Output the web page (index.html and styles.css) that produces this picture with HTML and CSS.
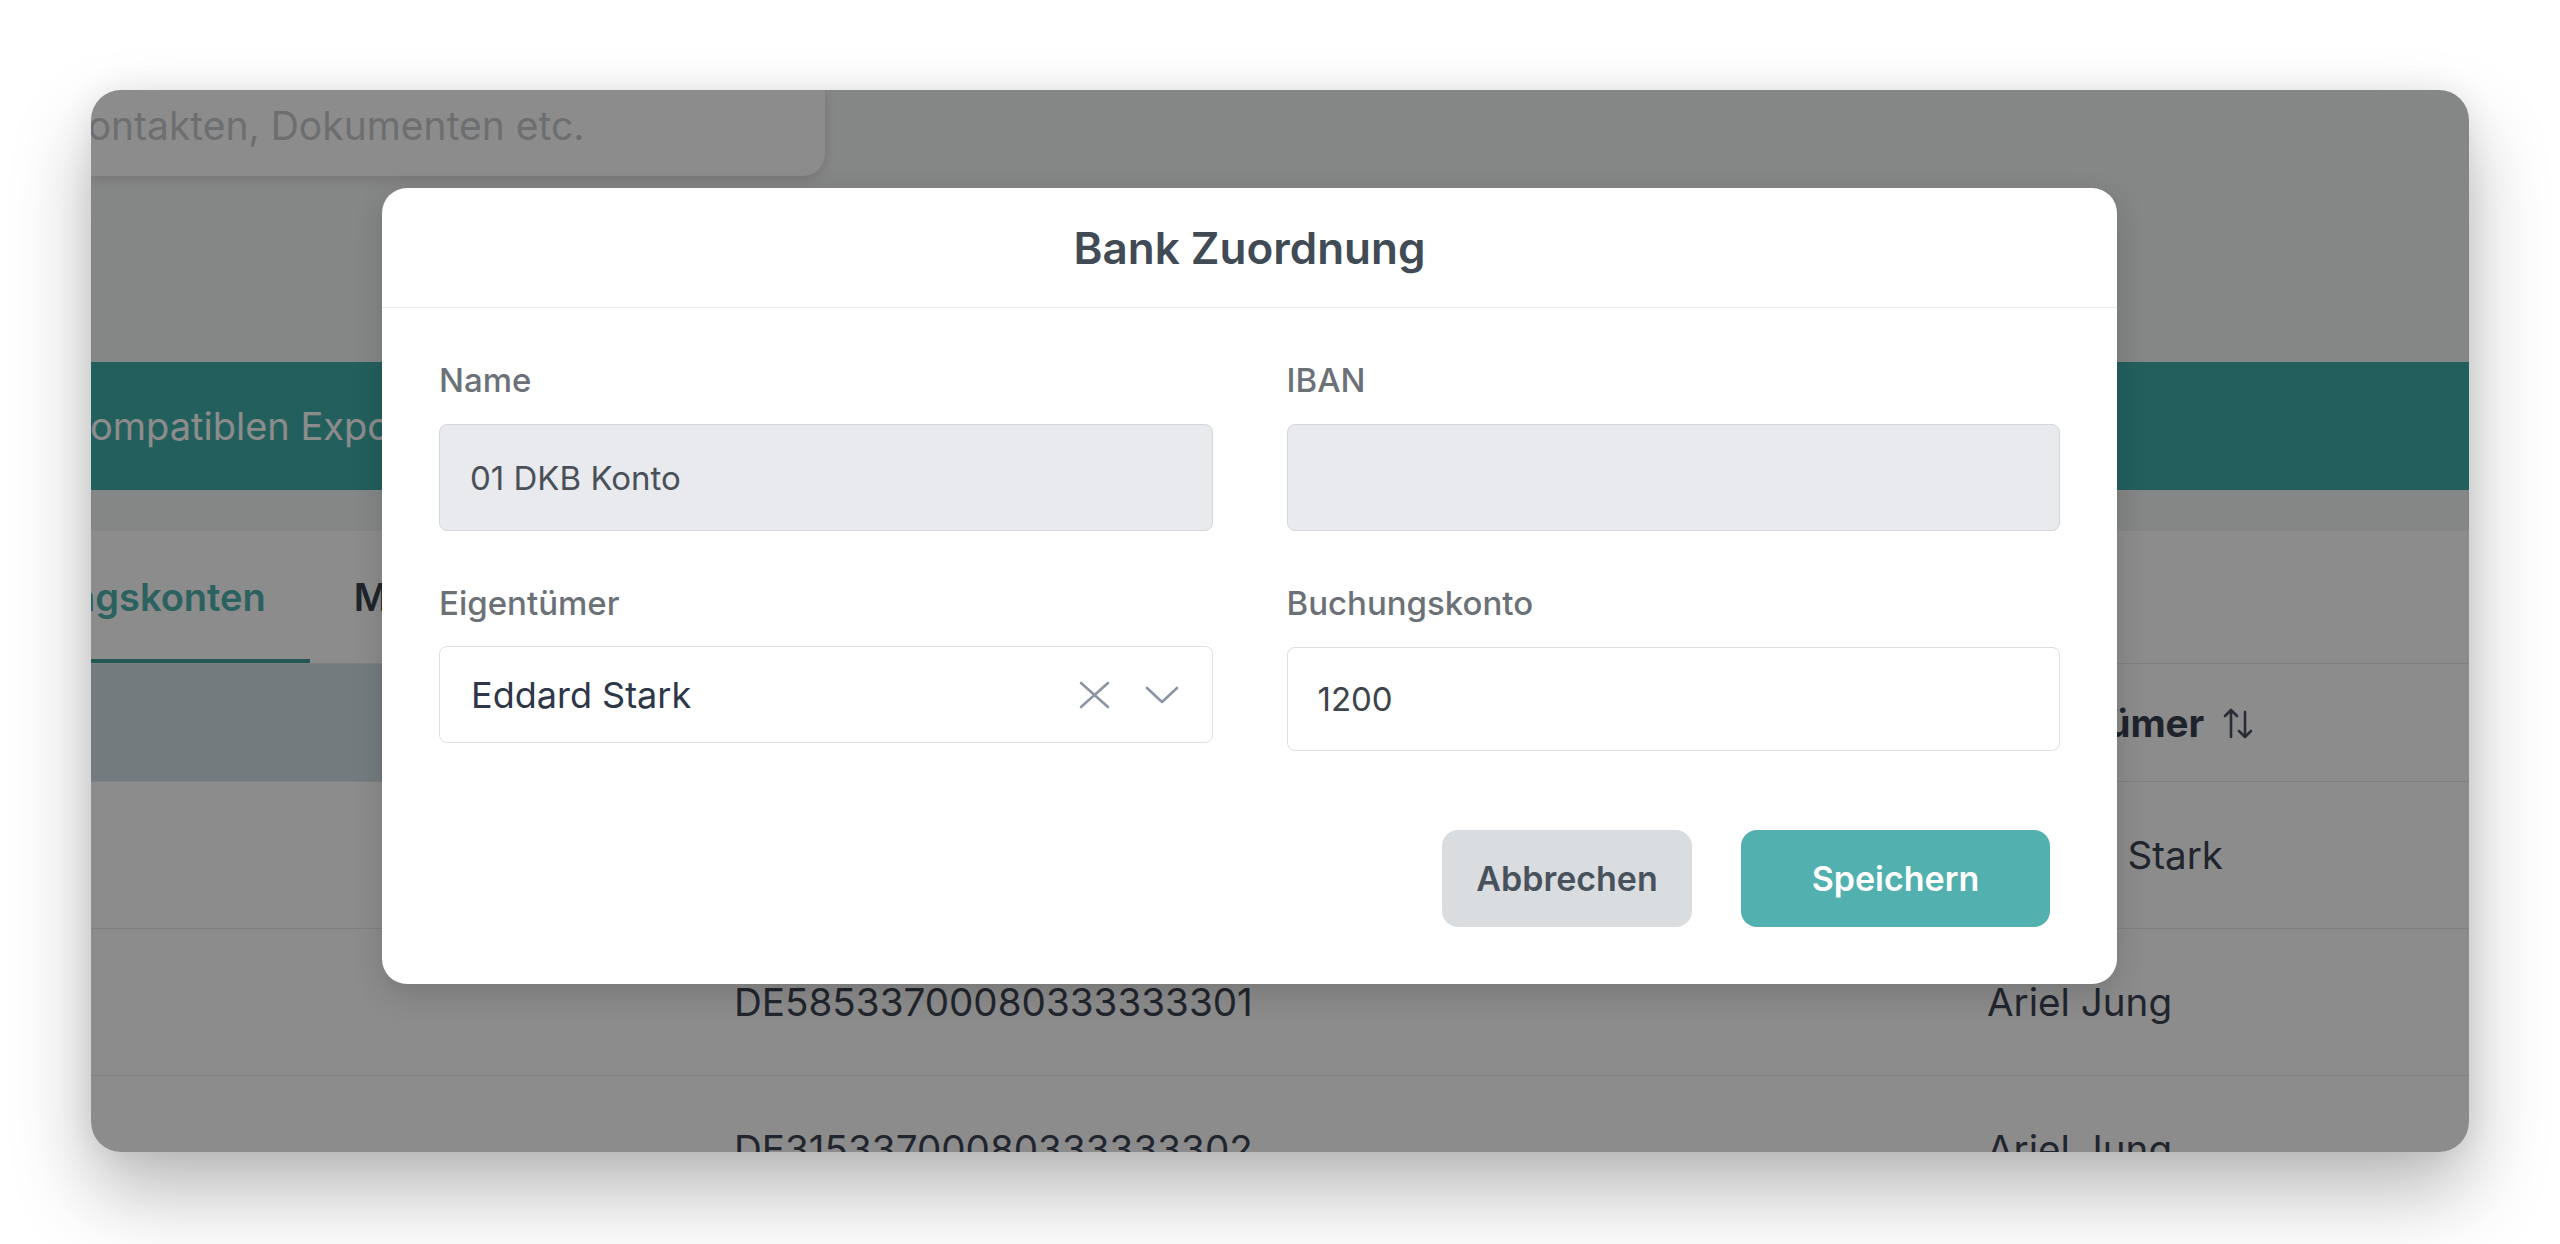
FILE: index.html
```html
<!DOCTYPE html>
<html lang="de">
<head>
    <meta charset="utf-8">
    <title>Bank Zuordnung</title>
    <link rel="stylesheet" href="styles.css">
</head>
<body>
    <div class="frame">
        <div class="app">
            <div class="topbar">
                <div class="search"><span class="search-text">Kontakten, Dokumenten etc.</span></div>
            </div>

            <div class="banner"><span class="banner-text">kompatiblen Export für Ihre Buchhaltung</span></div>

            <div class="card">
                <div class="tabs">
                    <div class="tab active">Buchungskonten</div>
                    <div class="tab">Mandanten</div>
                </div>

                <div class="table">
                    <div class="row head">
                        <div class="cell sel"></div>
                        <div class="cell">IBAN</div>
                        <div class="cell">Eigentümer
                            <svg class="sort" width="32" height="32" viewBox="0 0 32 32" fill="none" stroke="currentColor" stroke-width="2.6" stroke-linecap="round" stroke-linejoin="round">
                                <path d="M9 3v27M3 9l6-6 6 6"/>
                                <path d="M23 5v25M17 24l6 6 6-6"/>
                            </svg>
                        </div>
                    </div>
                    <div class="row">
                        <div class="cell"></div>
                        <div class="cell">DE12533700080333333300</div>
                        <div class="cell">Eddard Stark</div>
                    </div>
                    <div class="row">
                        <div class="cell"></div>
                        <div class="cell">DE58533700080333333301</div>
                        <div class="cell">Ariel Jung</div>
                    </div>
                    <div class="row">
                        <div class="cell"></div>
                        <div class="cell">DE31533700080333333302</div>
                        <div class="cell">Ariel Jung</div>
                    </div>
                </div>
            </div>
        </div>

        <div class="overlay"></div>

        <div class="modal">
            <div class="modal-head">Bank Zuordnung</div>
            <div class="modal-body">
                <div class="form">
                    <div class="field">
                        <label>Name</label>
                        <div class="input disabled name">01 DKB Konto</div>
                    </div>
                    <div class="field">
                        <label>IBAN</label>
                        <div class="input disabled"></div>
                    </div>
                    <div class="field">
                        <label>Eigentümer</label>
                        <div class="input select">
                            <span class="value">Eddard Stark</span>
                            <span class="icons">
                                <svg width="31" height="28" viewBox="0 0 31 28" fill="none" stroke="currentColor" stroke-width="2.6" stroke-linecap="round">
                                    <path d="M2 2l27 24M29 2L2 26"/>
                                </svg>
                                <svg width="34" height="18" viewBox="0 0 34 18" fill="none" stroke="currentColor" stroke-width="2.6" stroke-linecap="round" stroke-linejoin="round">
                                    <path d="M2 2l15 14 15-14"/>
                                </svg>
                            </span>
                        </div>
                    </div>
                    <div class="field">
                        <label>Buchungskonto</label>
                        <div class="input plain">1200</div>
                    </div>
                </div>
                <div class="modal-foot">
                    <button class="btn cancel">Abbrechen</button>
                    <button class="btn save">Speichern</button>
                </div>
            </div>
        </div>
    </div>
</body>
</html>
```

FILE: styles.css
```css
/* page and window frame */
html {
    background-color: #fff;
}
body {
    margin: 0;
    padding: 90px 0 92px 91px;
    background-color: #fff;
    font-family: Inter, "Noto Sans", Arial, sans-serif;
}
.frame {
    position: relative;
    width: 2378px;
    height: 1062px;
    border-radius: 30px;
    overflow: hidden;
    background-color: #f3f4f5;
    box-shadow: 0 40px 80px rgba(0, 0, 0, 0.28), 0 0 30px rgba(0, 0, 0, 0.08);
}

/* app behind the dialog */
.topbar {
    height: 86px;
}
.search {
    width: 734px;
    height: 86px;
    box-sizing: border-box;
    padding-top: 12px;
    background-color: #fff;
    border-bottom-right-radius: 22px;
    box-shadow: 0 4px 12px rgba(0, 0, 0, 0.12);
    font-size: 39px;
    line-height: 47px;
    color: #c6c9cd;
    white-space: nowrap;
    overflow: hidden;
}
.search-text {
    margin-left: -28px;
}
.banner {
    margin-top: 186px;
    height: 128px;
    display: flex;
    align-items: center;
    background-color: #41ada9;
    color: #fff;
    font-size: 38px;
    white-space: nowrap;
}
.banner-text {
    margin-left: -21px;
}
.card {
    margin-top: 41px;
    background-color: #fff;
}
.tabs {
    display: flex;
    height: 132px;
    margin-left: -180px;
    border-bottom: 1px solid #e6e8eb;
}
.tab {
    display: flex;
    align-items: center;
    padding: 0 44px;
    font-size: 38px;
    font-weight: 600;
    color: #3a4252;
}
.tab.active {
    color: #4fb1ad;
    box-shadow: inset 0 -4px 0 #3f9f9b;
}
.row {
    display: grid;
    grid-template-columns: 609px 1253px 1fr;
    height: 146px;
    border-bottom: 1px solid #e6e8eb;
}
.row.head {
    height: 117px;
}
.cell {
    display: flex;
    align-items: center;
    gap: 18px;
    padding-left: 34px;
    font-size: 38.6px;
    color: #3d4452;
    white-space: nowrap;
}
.head .cell {
    font-weight: 700;
    color: #3a4150;
}
.head .cell.sel {
    background-color: #d1e0e5;
}
.sort {
    color: #4a5262;
}
.overlay {
    position: absolute;
    top: 0;
    left: 0;
    right: 0;
    bottom: 0;
    background-color: rgba(0, 0, 0, 0.45);
}

/* dialog */
.modal {
    position: absolute;
    left: 291px;
    top: 98px;
    width: 1735px;
    background-color: #fff;
    border-radius: 25px;
    box-shadow: 0 10px 30px rgba(0, 0, 0, 0.15);
}
.modal-head {
    height: 119px;
    display: flex;
    align-items: center;
    justify-content: center;
    border-bottom: 1px solid #e9eaec;
    font-size: 44px;
    font-weight: 600;
    color: #414b55;
}
.modal-body {
    padding: 52px 57px 57px;
}
.form {
    display: grid;
    grid-template-columns: 1fr 1fr;
    column-gap: 74px;
    row-gap: 52px;
}
.field label {
    display: block;
    margin-bottom: 24px;
    font-size: 33px;
    line-height: 40px;
    font-weight: 500;
    color: #6b7177;
}
.input {
    display: flex;
    align-items: center;
    height: 107px;
    box-sizing: border-box;
    padding-left: 30px;
    border: 1px solid #d3d7dc;
    border-radius: 8px;
    font-size: 32px;
    color: #4a5058;
}
.input.disabled {
    background-color: #e8eaed;
}
.input.name {
    font-size: 33px;
}
.input.select {
    height: 97px;
    margin-top: -1px;
    padding: 0 33px 0 31px;
    border-color: #dde1e6;
    font-size: 36px;
    color: #2d3748;
}
.select .value {
    flex: 1;
}
.select .icons {
    display: flex;
    align-items: center;
    gap: 35px;
    color: #8b95a5;
}
.input.plain {
    height: 104px;
    border-color: #dcdfe3;
    font-size: 33px;
    color: #3d444c;
}
.modal-foot {
    display: flex;
    justify-content: flex-end;
    gap: 49px;
    margin-top: 79px;
    padding-right: 10px;
}
.btn {
    height: 97px;
    border: none;
    border-radius: 16px;
    font-family: inherit;
    font-size: 34px;
    font-weight: 600;
    cursor: pointer;
}
.btn.cancel {
    width: 250px;
    background-color: #dadde0;
    color: #48525c;
}
.btn.save {
    width: 309px;
    background-color: #52b0ae;
    color: #fff;
}
```
